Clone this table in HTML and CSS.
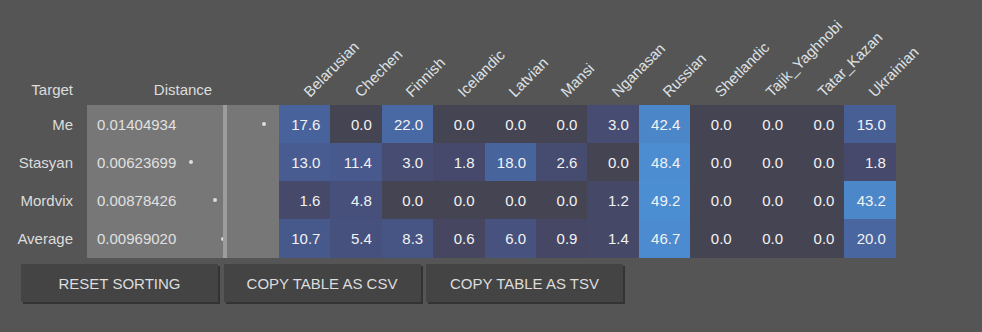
FILE: index.html
```html
<!DOCTYPE html>
<html>
<head>
<meta charset="utf-8">
<link rel="stylesheet" href="styles.css">
</head>
<body>
<div class="page">
  <div class="grid">
    <div class="hd hd-target">Target</div>
    <div class="hd hd-dist">Distance</div>
    <div class="hd hd-lang"><span>Belarusian</span></div>
    <div class="hd hd-lang"><span>Chechen</span></div>
    <div class="hd hd-lang"><span>Finnish</span></div>
    <div class="hd hd-lang"><span>Icelandic</span></div>
    <div class="hd hd-lang"><span>Latvian</span></div>
    <div class="hd hd-lang"><span>Mansi</span></div>
    <div class="hd hd-lang"><span>Nganasan</span></div>
    <div class="hd hd-lang"><span>Russian</span></div>
    <div class="hd hd-lang"><span>Shetlandic</span></div>
    <div class="hd hd-lang"><span>Tajik_Yaghnobi</span></div>
    <div class="hd hd-lang"><span>Tatar_Kazan</span></div>
    <div class="hd hd-lang"><span>Ukrainian</span></div>

    <div class="label">Me</div>
    <div class="dist">0.01404934<i class="dot" style="left:174.7px"></i></div>
    <div class="num" style="background:rgb(72,99,155)">17.6</div>
    <div class="num" style="background:rgb(69,68,83)">0.0</div>
    <div class="num" style="background:rgb(73,105,164)">22.0</div>
    <div class="num" style="background:rgb(69,68,83)">0.0</div>
    <div class="num" style="background:rgb(69,68,83)">0.0</div>
    <div class="num" style="background:rgb(69,68,83)">0.0</div>
    <div class="num" style="background:rgb(70,76,114)">3.0</div>
    <div class="num" style="background:rgb(75,134,201)">42.4</div>
    <div class="num" style="background:rgb(69,68,83)">0.0</div>
    <div class="num" style="background:rgb(69,68,83)">0.0</div>
    <div class="num" style="background:rgb(69,68,83)">0.0</div>
    <div class="num" style="background:rgb(72,95,150)">15.0</div>

    <div class="label">Stasyan</div>
    <div class="dist">0.00623699<i class="dot" style="left:102px"></i></div>
    <div class="num" style="background:rgb(72,92,145)">13.0</div>
    <div class="num" style="background:rgb(71,89,141)">11.4</div>
    <div class="num" style="background:rgb(70,76,114)">3.0</div>
    <div class="num" style="background:rgb(70,73,107)">1.8</div>
    <div class="num" style="background:rgb(72,100,157)">18.0</div>
    <div class="num" style="background:rgb(70,75,112)">2.6</div>
    <div class="num" style="background:rgb(69,68,83)">0.0</div>
    <div class="num" style="background:rgb(76,141,209)">48.4</div>
    <div class="num" style="background:rgb(69,68,83)">0.0</div>
    <div class="num" style="background:rgb(69,68,83)">0.0</div>
    <div class="num" style="background:rgb(69,68,83)">0.0</div>
    <div class="num" style="background:rgb(70,73,107)">1.8</div>

    <div class="label">Mordvix</div>
    <div class="dist">0.00878426<i class="dot" style="left:125.5px"></i></div>
    <div class="num" style="background:rgb(70,73,106)">1.6</div>
    <div class="num" style="background:rgb(71,80,123)">4.8</div>
    <div class="num" style="background:rgb(69,68,83)">0.0</div>
    <div class="num" style="background:rgb(69,68,83)">0.0</div>
    <div class="num" style="background:rgb(69,68,83)">0.0</div>
    <div class="num" style="background:rgb(69,68,83)">0.0</div>
    <div class="num" style="background:rgb(70,72,103)">1.2</div>
    <div class="num" style="background:rgb(76,142,210)">49.2</div>
    <div class="num" style="background:rgb(69,68,83)">0.0</div>
    <div class="num" style="background:rgb(69,68,83)">0.0</div>
    <div class="num" style="background:rgb(69,68,83)">0.0</div>
    <div class="num" style="background:rgb(76,135,202)">43.2</div>

    <div class="label">Average</div>
    <div class="dist">0.00969020<i class="dot" style="left:133.5px"></i></div>
    <div class="num" style="background:rgb(71,88,139)">10.7</div>
    <div class="num" style="background:rgb(71,81,125)">5.4</div>
    <div class="num" style="background:rgb(71,85,133)">8.3</div>
    <div class="num" style="background:rgb(70,70,97)">0.6</div>
    <div class="num" style="background:rgb(71,82,127)">6.0</div>
    <div class="num" style="background:rgb(70,71,100)">0.9</div>
    <div class="num" style="background:rgb(70,72,104)">1.4</div>
    <div class="num" style="background:rgb(76,139,207)">46.7</div>
    <div class="num" style="background:rgb(69,68,83)">0.0</div>
    <div class="num" style="background:rgb(69,68,83)">0.0</div>
    <div class="num" style="background:rgb(69,68,83)">0.0</div>
    <div class="num" style="background:rgb(73,102,160)">20.0</div>
  </div>
  <div class="buttons">
    <button class="btn">Reset sorting</button>
    <button class="btn">Copy table as CSV</button>
    <button class="btn">Copy table as TSV</button>
  </div>
</div>
</body>
</html>
```

FILE: styles.css
```css
html, body {
  margin: 0;
  padding: 0;
  background: #555555;
  height: 100%;
}
body {
  font-family: "Liberation Sans", Arial, sans-serif;
  font-size: 15px;
  color: #dddddd;
}
.page {
  padding: 8px 0 0 8px;
}
.grid {
  display: grid;
  grid-template-columns: 79px 192px repeat(12, 51.42px);
  grid-template-rows: 97px 38px 38px 38px 39px;
}
.hd {
  display: flex;
  align-items: flex-end;
  padding-bottom: 7px;
  white-space: nowrap;
  line-height: 17px;
}
.hd-target {
  justify-content: flex-end;
  padding-right: 14px;
}
.hd-dist {
  justify-content: center;
}
.hd-lang {
  padding-left: 32.5px;
  padding-bottom: 5px;
}
.hd-lang span {
  display: block;
  transform: rotate(-45deg);
  transform-origin: left bottom;
  color: #dde2e6;
}
.label {
  display: flex;
  align-items: center;
  justify-content: flex-end;
  padding-right: 14px;
}
.dist {
  position: relative;
  display: flex;
  align-items: center;
  padding-left: 10px;
  background: #777777;
  color: #e0e0e0;
}
.dist::after {
  content: "";
  position: absolute;
  left: 136px;
  top: 0;
  bottom: 0;
  width: 4px;
  background: #9c9c9c;
}
.dot {
  position: absolute;
  top: 50%;
  width: 4px;
  height: 4px;
  margin-top: -2px;
  border-radius: 50%;
  background: #dcdcdc;
}
.num {
  display: flex;
  align-items: center;
  justify-content: flex-end;
  padding-right: 10px;
  color: #f2f2f2;
}
.buttons {
  display: flex;
  gap: 5.5px;
  margin: 6px 0 0 13px;
}
.btn {
  width: 197px;
  height: 38px;
  padding: 0;
  border: none;
  background: #444444;
  color: #dddddd;
  font-family: "Liberation Sans", Arial, sans-serif;
  font-size: 15px;
  text-transform: uppercase;
  box-shadow: 2px 2px 0 #333333;
  cursor: pointer;
}
```
